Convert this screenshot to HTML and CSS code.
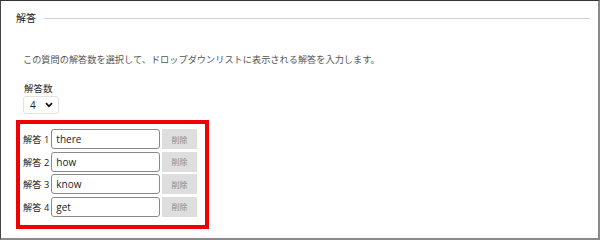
FILE: index.html
```html
<!DOCTYPE html>
<html lang="ja">
<head>
<meta charset="utf-8">
<link rel="stylesheet" href="styles.css">
</head>
<body>
<div class="frame">
  <div class="legend-row">
    <span class="legend">解答</span>
    <span class="rule"></span>
  </div>
  <p class="desc">この質問の解答数を選択して、ドロップダウンリストに表示される解答を入力します。</p>
  <div class="count-label">解答数</div>
  <div class="select">
    <span class="select-value">4</span>
    <svg class="chev" width="8" height="6" viewBox="0 0 8 6"><path d="M1 1.2 L4 4.3 L7 1.2" fill="none" stroke="#111" stroke-width="1.8"/></svg>
  </div>
  <div class="answers">
    <div class="row"><span class="label">解答 1</span><span class="input">there</span><span class="del">削除</span></div>
    <div class="row"><span class="label">解答 2</span><span class="input">how</span><span class="del">削除</span></div>
    <div class="row"><span class="label">解答 3</span><span class="input">know</span><span class="del">削除</span></div>
    <div class="row"><span class="label">解答 4</span><span class="input">get</span><span class="del">削除</span></div>
  </div>
</div>
</body>
</html>
```
FILE: styles.css
```css
* { box-sizing: border-box; }
html, body { margin: 0; padding: 0; background: #fff; }
body {
  font-family: "Open Sans", "Noto Sans CJK JP", sans-serif;
  color: #222;
}
.frame {
  width: 600px;
  height: 240px;
  border-top: 1px solid #333;
  border-left: 1px solid #444;
  border-right: 2px solid #8a8a8a;
  border-bottom: 2px solid #8a8a8a;
  padding: 11px 8px 0 15px;
  display: flex;
  flex-direction: column;
  align-items: flex-start;
}
.legend-row {
  display: flex;
  align-items: center;
  width: 100%;
  height: 12px;
}
.legend {
  font-family: "Noto Sans CJK JP", sans-serif;
  font-size: 10px;
  color: #222;
  line-height: 12px;
}
.rule {
  flex: 1;
  height: 1px;
  background: #d0d0d0;
  margin-left: 8px;
}
.desc {
  margin: 29px 0 0 7px;
  font-family: "Noto Sans CJK JP", sans-serif;
  font-size: 9.2px;
  line-height: 12px;
  color: #555;
}
.count-label {
  margin: 17px 0 0 8px;
  font-family: "Noto Sans CJK JP", sans-serif;
  font-size: 9.5px;
  line-height: 12px;
  color: #222;
}
.select {
  margin: 2px 0 0 7px;
  width: 36px;
  height: 18px;
  border: 1px solid #e2e2e2;
  border-radius: 3px;
  display: flex;
  align-items: center;
  justify-content: space-between;
  padding: 0 5px 0 6px;
  font-size: 10px;
  color: #222;
}
.chev { display: block; }
.answers {
  margin-top: 6px;
  width: 193px;
  border: 4px solid #f00000;
  padding: 5px 8px 8px 3px;
  display: flex;
  flex-direction: column;
  gap: 2.5px;
}
.row {
  display: flex;
  align-items: center;
  height: 20px;
  gap: 2px;
}
.label {
  flex: none;
  font-family: "Open Sans", "Noto Sans CJK JP", sans-serif;
  font-size: 9.3px;
  color: #222;
  white-space: nowrap;
}
.input {
  flex: 1;
  min-width: 0;
  height: 20px;
  border: 1px solid #8a8a8a;
  border-radius: 3px;
  padding: 0 4px;
  font-size: 10px;
  line-height: 18px;
  color: #222;
}
.del {
  flex: none;
  width: 35px;
  height: 20px;
  background: #dedede;
  color: #8a8a8a;
  font-family: "Noto Sans CJK JP", sans-serif;
  font-size: 8px;
  display: flex;
  align-items: center;
  justify-content: center;
}
```
